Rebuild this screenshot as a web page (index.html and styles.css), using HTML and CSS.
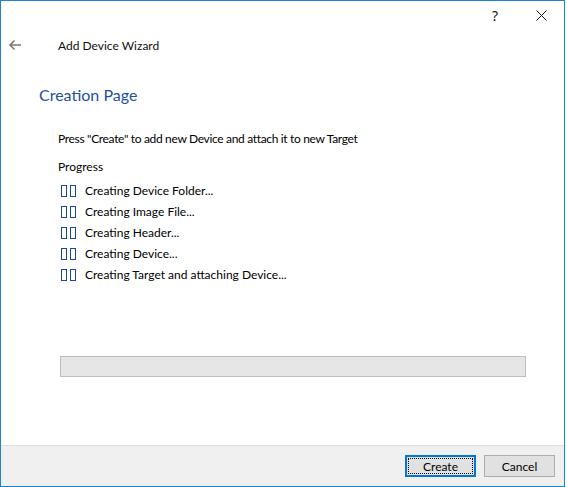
FILE: index.html
```html
<!DOCTYPE html>
<html>
<head>
<meta charset="utf-8">
<link rel="stylesheet" href="styles.css">
</head>
<body>
<div class="window">
  <div class="titlebar">
    <div class="tb-btn help">?</div>
    <div class="tb-btn close">
      <svg width="11" height="11" viewBox="0 0 11 11"><path d="M0.5 0.5 L10.5 10.5 M10.5 0.5 L0.5 10.5" stroke="#111" stroke-width="1" fill="none"/></svg>
    </div>
  </div>
  <div class="header">
    <div class="back">
      <svg width="14" height="12" viewBox="0 0 14 12"><path d="M13 6 H2 M6.5 1.5 L2 6 L6.5 10.5" stroke="#7a7a7a" stroke-width="1.6" fill="none"/></svg>
    </div>
    <div class="wiz-title">Add Device Wizard</div>
  </div>
  <div class="content">
    <div class="page-title">Creation Page</div>
    <div class="body-area">
      <div class="instr">Press "Create" to add new Device and attach it to new Target</div>
      <div class="progress-label">Progress</div>
      <ul class="steps">
        <li><span class="tofu"><i></i><i></i></span>Creating Device Folder...</li>
        <li><span class="tofu"><i></i><i></i></span>Creating Image File...</li>
        <li><span class="tofu"><i></i><i></i></span>Creating Header...</li>
        <li><span class="tofu"><i></i><i></i></span>Creating Device...</li>
        <li><span class="tofu"><i></i><i></i></span>Creating Target and attaching Device...</li>
      </ul>
      <div class="bar"></div>
    </div>
  </div>
  <div class="footer">
    <button class="btn primary"><span>Create</span></button>
    <button class="btn">Cancel</button>
  </div>
</div>
</body>
</html>
```
FILE: styles.css
```css
html, body {
  margin: 0;
  padding: 0;
  background: #ffffff;
}
body {
  font-family: "Lato", "Noto Sans", sans-serif;
  font-size: 12px;
  color: #000;
}
.window {
  width: 565px;
  height: 487px;
  box-sizing: border-box;
  border: 1px solid #1883d7;
  display: flex;
  flex-direction: column;
  background: #fff;
}
.titlebar {
  height: 29px;
  display: flex;
  justify-content: flex-end;
}
.tb-btn {
  width: 46px;
  height: 29px;
  display: flex;
  align-items: center;
  justify-content: center;
}
.help {
  font-family: "Noto Sans", sans-serif;
  font-size: 14px;
  color: #111;
}
.header {
  height: 30px;
  display: flex;
  align-items: center;
}
.back {
  width: 57px;
  padding-left: 7px;
  box-sizing: border-box;
  display: flex;
  align-items: center;
}
.wiz-title {
  font-size: 12px;
  color: #111;
}
.content {
  padding-left: 38px;
}
.page-title {
  margin-top: 24px;
  font-size: 16px;
  line-height: 22px;
  color: #1c4fa5;
}
.body-area {
  padding-left: 19px;
}
.instr {
  margin-top: 25px;
  line-height: 16px;
  letter-spacing: -0.33px;
}
.progress-label {
  margin-top: 12px;
  line-height: 16px;
}
.steps {
  list-style: none;
  margin: 5px 0 0 0;
  padding: 0;
}
.steps li {
  height: 21px;
  display: flex;
  align-items: center;
}
.tofu {
  display: flex;
  gap: 3px;
  margin-left: 3px;
  margin-right: 9px;
}
.tofu i {
  display: block;
  width: 6px;
  height: 12px;
  box-sizing: border-box;
  border: 1.5px solid #1a45a0;
}
.bar {
  margin-top: 71px;
  margin-left: 2px;
  width: 466px;
  height: 21px;
  box-sizing: border-box;
  border: 1px solid #bcbcbc;
  background: #e6e6e6;
}
.footer {
  margin-top: auto;
  height: 41px;
  box-sizing: border-box;
  border-top: 1px solid #dfdfdf;
  background: #f0f0f0;
  display: flex;
  justify-content: flex-end;
  align-items: center;
  gap: 8px;
  padding-right: 9px;
}
.btn {
  width: 71px;
  height: 22px;
  box-sizing: border-box;
  border: 1px solid #adadad;
  background: #e1e1e1;
  font-family: inherit;
  font-size: 12px;
  color: #000;
  padding: 0;
  display: flex;
  align-items: center;
  justify-content: center;
}
.btn.primary {
  border: 2px solid #0078d7;
  padding: 1px;
}
.btn.primary span {
  flex: 1;
  align-self: stretch;
  display: flex;
  align-items: center;
  justify-content: center;
  border: 1px dotted #000;
}
```
